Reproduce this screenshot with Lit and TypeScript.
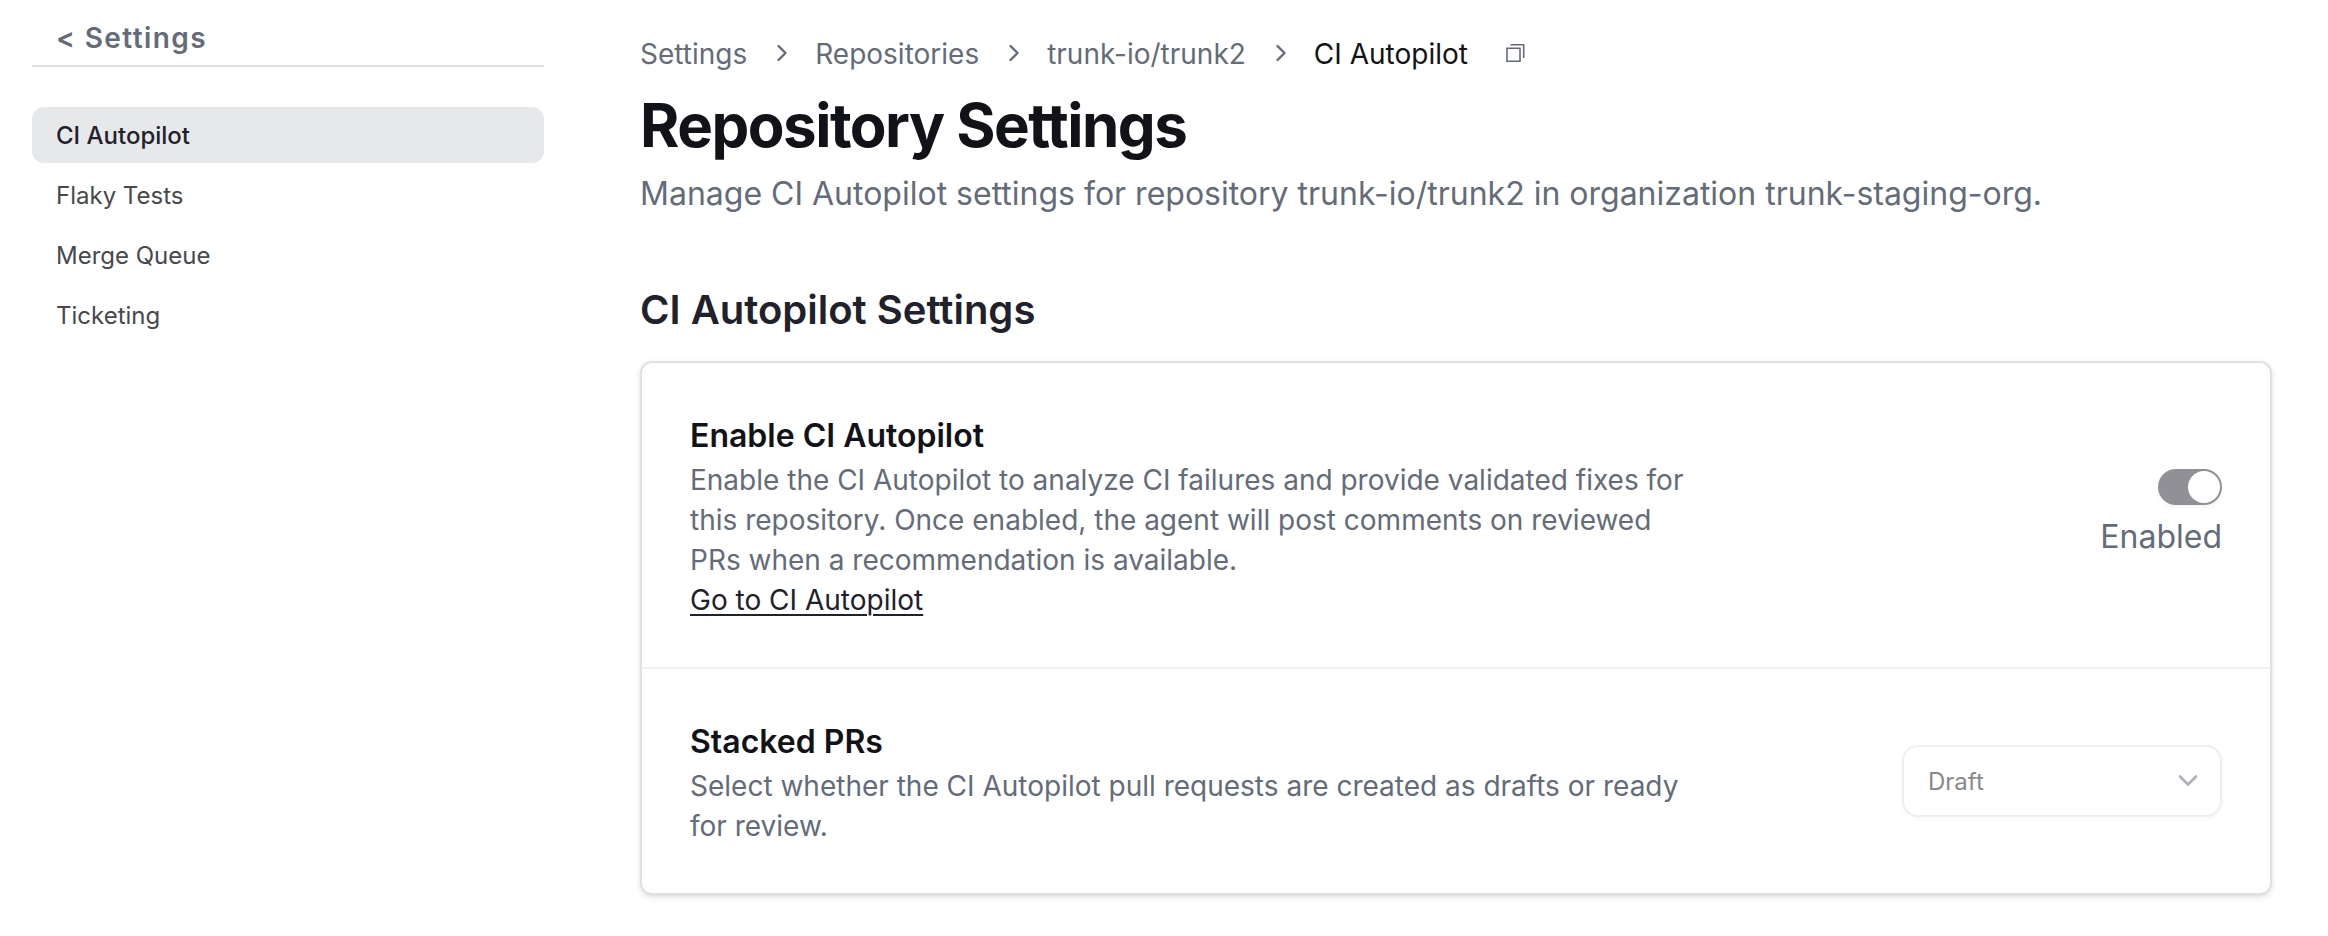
import { LitElement, html, css } from "lit";
import { customElement, state } from "lit/decorators.js";
import { classMap } from "lit/directives/class-map.js";

@customElement("side-nav")
class SideNav extends LitElement {
  static styles = css`
    :host {
      display: block;
    }
    .back {
      display: block;
      padding: 16px 24px 5px;
      border-bottom: 2px solid #e0e0e6;
      color: #646b79;
      font-size: 28px;
      line-height: 44px;
      font-weight: 600;
      letter-spacing: 0.05em;
      text-decoration: none;
    }
    .list {
      display: flex;
      flex-direction: column;
      gap: 4px;
      margin: 0;
      padding: 40px 0 0;
      list-style: none;
    }
    .item {
      display: block;
      padding: 13px 24px 11px;
      border-radius: 12px;
      color: #48484d;
      font-size: 24px;
      line-height: 32px;
      text-decoration: none;
    }
    .active {
      background: #e7e8ea;
      color: #1f212d;
      font-weight: 500;
    }
  `;

  @state() private items = ["CI Autopilot", "Flaky Tests", "Merge Queue", "Ticketing"];
  @state() private current = "CI Autopilot";

  render() {
    return html`
      <nav aria-label="Repository settings">
        <a class="back" href="#">&lt; Settings</a>
        <ul class="list">
          ${this.items.map(
            (name) => html`<li>
              <a
                class=${classMap({ item: true, active: name === this.current })}
                href="#"
                @click=${() => (this.current = name)}
                >${name}</a
              >
            </li>`
          )}
        </ul>
      </nav>
    `;
  }
}

@customElement("bread-crumbs")
class BreadCrumbs extends LitElement {
  static styles = css`
    :host {
      display: block;
    }
    .trail {
      display: flex;
      align-items: center;
      gap: 20px;
      font-size: 28px;
      line-height: 40px;
      color: #646b79;
    }
    .link {
      color: inherit;
      text-decoration: none;
    }
    .here {
      color: #121319;
    }
    .sep {
      width: 28px;
      height: 28px;
      flex: none;
    }
    .copy {
      display: flex;
      margin-left: 16px;
      padding: 0;
      border: 0;
      background: none;
      color: inherit;
      cursor: pointer;
    }
    .copy svg {
      width: 24px;
      height: 24px;
    }
  `;

  private parents = ["Settings", "Repositories", "trunk-io/trunk2"];

  render() {
    return html`
      <nav class="trail" aria-label="Breadcrumb">
        ${this.parents.map(
          (name) => html`<a class="link" href="#">${name}</a>
            <svg class="sep" viewBox="0 0 28 28" fill="none" stroke="currentColor" stroke-width="2.4" stroke-linecap="round" stroke-linejoin="round" aria-hidden="true">
              <path d="M11.5 6l7 7-7 7" />
            </svg>`
        )}
        <span class="here" aria-current="page">CI Autopilot</span>
        <button class="copy" type="button" aria-label="Copy">
          <svg viewBox="0 0 24 24" fill="none" stroke="currentColor" stroke-width="1.6" aria-hidden="true">
            <path d="M3 6.3h13v13H3z" />
            <path d="M6.5 2.8h13.2V16" />
          </svg>
        </button>
      </nav>
    `;
  }
}

@customElement("settings-card")
class SettingsCard extends LitElement {
  static styles = css`
    :host {
      display: block;
    }
    .card {
      border: 2px solid #e0e0e6;
      border-radius: 12px;
      background: #fff;
      box-shadow: 0 2px 6px rgba(0, 0, 0, 0.1), 0 2px 4px -2px rgba(0, 0, 0, 0.1);
    }
    .row {
      display: flex;
      align-items: center;
      justify-content: space-between;
      gap: 48px;
      padding: 47px 48px;
    }
    .row + .row {
      border-top: 2px solid #f0f0f1;
    }
    .copy {
      max-width: 1000px;
      padding-top: 2px;
    }
    .name {
      margin: 0;
      color: #121319;
      font-size: 32px;
      line-height: 48px;
      font-weight: 600;
    }
    .text {
      margin: 0;
      color: #646b79;
      font-size: 28px;
      line-height: 40px;
    }
    .go {
      color: #1f212d;
      text-decoration: underline;
      text-decoration-thickness: 2px;
      text-underline-offset: 4px;
    }
    .toggle {
      display: flex;
      flex-direction: column;
      align-items: flex-end;
      color: #646b79;
      font-size: 32px;
      line-height: 48px;
      gap: 8px;
    }
    .switch {
      appearance: none;
      display: flex;
      justify-content: flex-start;
      box-sizing: border-box;
      width: 64px;
      height: 36px;
      margin: 0;
      padding: 2px;
      border-radius: 18px;
      background: #cfd0d4;
      box-shadow: 0 2px 4px rgba(0, 0, 0, 0.05);
    }
    .switch::before {
      content: "";
      width: 32px;
      height: 32px;
      border-radius: 50%;
      background: #fff;
    }
    .switch:checked {
      justify-content: flex-end;
      background: #909096;
    }
    .picker {
      display: grid;
      align-items: center;
      width: 320px;
      flex: none;
      color: #aeb1b8;
    }
    .select {
      grid-area: 1 / 1;
      appearance: none;
      width: 100%;
      height: 72px;
      padding: 0 24px;
      border: 2px solid #efefef;
      border-radius: 16px;
      background: #fff;
      box-shadow: 0 2px 4px rgba(0, 0, 0, 0.03);
      color: #88898c;
      font: inherit;
      font-size: 24px;
      opacity: 1;
    }
    .chevron {
      grid-area: 1 / 1;
      justify-self: end;
      width: 24px;
      height: 24px;
      margin-right: 22px;
      pointer-events: none;
    }
  `;

  @state() private enabled = true;

  render() {
    return html`
      <div class="card">
        <section class="row">
          <div class="copy">
            <h3 class="name">Enable CI Autopilot</h3>
            <p class="text">
              Enable the CI Autopilot to analyze CI failures and provide validated fixes for this
              repository. Once enabled, the agent will post comments on reviewed PRs when a
              recommendation is available.
            </p>
            <p class="text"><a class="go" href="#">Go to CI Autopilot</a></p>
          </div>
          <label class="toggle">
            <input
              class="switch"
              type="checkbox"
              role="switch"
              .checked=${this.enabled}
              @change=${(e: Event) => (this.enabled = (e.target as HTMLInputElement).checked)}
            />
            ${this.enabled ? "Enabled" : "Disabled"}
          </label>
        </section>
        <section class="row">
          <div class="copy">
            <h3 class="name">Stacked PRs</h3>
            <p class="text">
              Select whether the CI Autopilot pull requests are created as drafts or ready for
              review.
            </p>
          </div>
          <div class="picker">
            <select class="select" aria-label="Stacked PRs" disabled>
              <option>Draft</option>
              <option>Ready for review</option>
            </select>
            <svg class="chevron" viewBox="0 0 24 24" fill="none" stroke="currentColor" stroke-width="2.8" stroke-linecap="round" stroke-linejoin="round" aria-hidden="true">
              <path d="M4 7.5l8 8 8-8" />
            </svg>
          </div>
        </section>
      </div>
    `;
  }
}

@customElement("app-root")
class AppRoot extends LitElement {
  static styles = css`
    :host {
      display: block;
      min-height: 100vh;
      background: #fff;
      font-family: Inter, "Liberation Sans", sans-serif;
      font-variant-ligatures: none;
    }
    .page {
      display: grid;
      grid-template-columns: 512px minmax(0, 1fr);
      gap: 96px;
      padding: 0 56px 40px 32px;
    }
    .main {
      padding-top: 34px;
      min-width: 0;
    }
    .title {
      margin: 19px 0 0;
      color: #121319;
      font-size: 60px;
      line-height: 64px;
      font-weight: 700;
      letter-spacing: -0.025em;
    }
    .lead {
      margin: 13px 0 0;
      color: #646b79;
      font-size: 32px;
      line-height: 48px;
    }
    .heading {
      margin: 64px 0 23px;
      color: #1f212d;
      font-size: 40px;
      line-height: 56px;
      font-weight: 600;
    }
  `;

  render() {
    return html`
      <div class="page">
        <side-nav></side-nav>
        <main class="main">
          <bread-crumbs></bread-crumbs>
          <h1 class="title">Repository Settings</h1>
          <p class="lead">
            Manage CI Autopilot settings for repository trunk-io/trunk2 in organization
            trunk-staging-org.
          </p>
          <h2 class="heading">CI Autopilot Settings</h2>
          <settings-card></settings-card>
        </main>
      </div>
    `;
  }
}
